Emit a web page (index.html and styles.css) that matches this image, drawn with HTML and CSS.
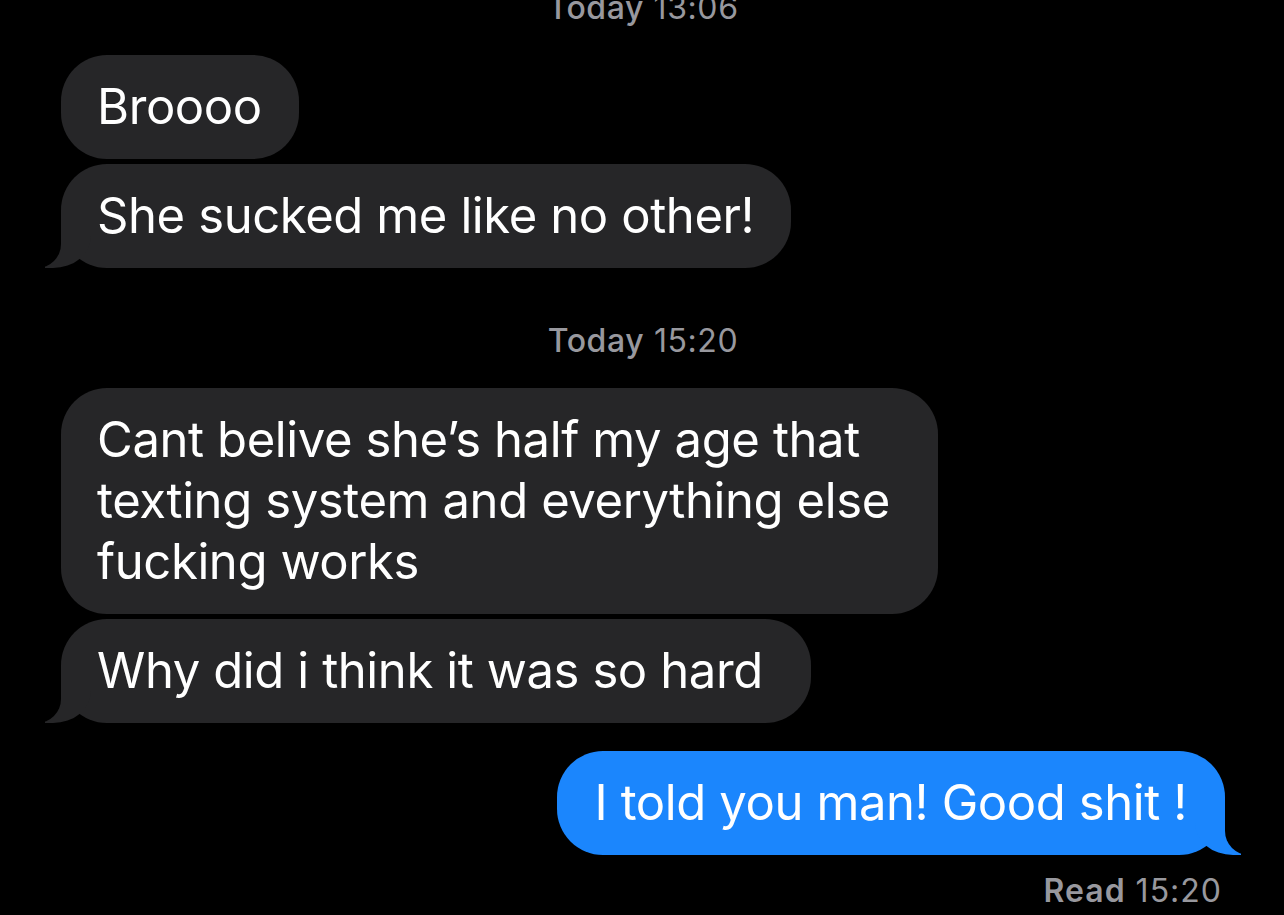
FILE: index.html
```html
<!DOCTYPE html>
<html lang="en">
<head>
<meta charset="utf-8">
<title>Messages</title>
<link rel="stylesheet" href="styles.css">
</head>
<body>
<main class="thread">
  <div class="stamp stamp-first"><b>Today</b> 13:06</div>
  <div class="row"><div class="bubble them">Broooo</div></div>
  <div class="row"><div class="bubble them tail">She sucked me like no other!</div></div>

  <div class="stamp"><b>Today</b> 15:20</div>
  <div class="row"><div class="bubble them roomy">Cant belive she’s half my age that<br>texting system and everything else<br>fucking works</div></div>
  <div class="row"><div class="bubble them tail roomy">Why did i think it was so hard</div></div>

  <div class="row me"><div class="bubble mine tail">I told you man! Good shit !</div></div>
  <div class="receipt"><b>Read</b> 15:20</div>
</main>
</body>
</html>
```
FILE: styles.css
```css
html, body {
  margin: 0;
  background: #000;
}
body {
  width: 1284px;
  height: 915px;
  overflow: hidden;
  font-family: Inter, "Liberation Sans", sans-serif;
  color: #fff;
}
.thread {
  display: flex;
  flex-direction: column;
  padding: 0 59px 0 61px;
}
.stamp {
  text-align: center;
  color: #98989e;
  font-size: 32px;
  letter-spacing: 0.6px;
  line-height: 36px;
  margin: 50px 0 29px;
}
.stamp b { font-weight: 500; }
.receipt b { font-weight: 600; }
.stamp-first { margin-top: -10px; margin-bottom: 29px; }
.row {
  display: flex;
  margin-bottom: 5px;
}
.row.me {
  justify-content: flex-end;
  margin-top: 23px;
  margin-bottom: 0;
}
.bubble {
  position: relative;
  font-size: 49px;
  line-height: 61px;
  letter-spacing: -0.4px;
  padding: 21px 37px 22px 36px;
  border-radius: 46px;
}
.bubble.roomy { padding-right: 48px; }
.them { background: #262628; }
.mine { background: #1b86fd; padding: 21px 38px 22px 38px; }
.tail::before, .tail::after {
  content: "";
  position: absolute;
  bottom: 0;
  height: 58px;
}
.them.tail::before {
  left: -16px;
  width: 46px;
  background: #262628;
  border-bottom-right-radius: 38px 32px;
}
.them.tail::after {
  left: -60px;
  width: 60px;
  background: #000;
  border-bottom-right-radius: 24px;
}
.mine.tail::before {
  right: -16px;
  width: 46px;
  background: #1b86fd;
  border-bottom-left-radius: 38px 32px;
}
.mine.tail::after {
  right: -60px;
  width: 60px;
  background: #000;
  border-bottom-left-radius: 24px;
}
.receipt {
  align-self: flex-end;
  margin: 18px 3px 0 0;
  color: #98989e;
  font-size: 32px;
  letter-spacing: 1px;
  line-height: 36px;
}
```
